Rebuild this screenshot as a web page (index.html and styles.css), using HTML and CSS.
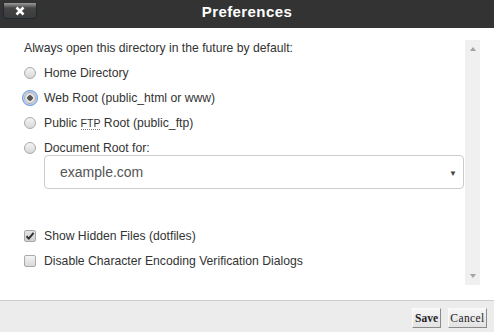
FILE: index.html
```html
<!DOCTYPE html>
<html lang="en">
<head>
    <meta charset="UTF-8">
    <title>Preferences</title>
    <link rel="stylesheet" href="styles.css">
</head>
<body>
    <div class="dialog">
        <div class="titlebar">
            <button class="close-btn" type="button">
                <svg width="10" height="10" viewBox="0 0 10 10"><path d="M1.5 1.5 L8.5 8.5 M8.5 1.5 L1.5 8.5" stroke="#fff" stroke-width="2.6"/></svg>
            </button>
            <h1 class="title">Preferences</h1>
            <span></span>
        </div>

        <div class="dialog-body">
            <form class="content">
                <div class="row intro">Always open this directory in the future by default:</div>

                <label class="row">
                    <input type="radio" name="dir" class="radio">
                    <span>Home Directory</span>
                </label>
                <label class="row">
                    <input type="radio" name="dir" class="radio focused" checked>
                    <span>Web Root (public_html or www)</span>
                </label>
                <label class="row">
                    <input type="radio" name="dir" class="radio">
                    <span>Public <abbr title="File Transfer Protocol">FTP</abbr> Root (public_ftp)</span>
                </label>
                <label class="row">
                    <input type="radio" name="dir" class="radio">
                    <span>Document Root for:</span>
                </label>

                <div class="select">
                    <span>example.com</span>
                    <span class="caret">&#9660;</span>
                </div>

                <label class="row check-first">
                    <span class="checkbox checked">
                        <svg width="10" height="10" viewBox="0 0 10 10"><path d="M1.5 5.2 L3.8 7.6 L8.6 1.8" fill="none" stroke="#333" stroke-width="2"/></svg>
                    </span>
                    <span>Show Hidden Files (dotfiles)</span>
                </label>
                <label class="row">
                    <span class="checkbox"></span>
                    <span>Disable Character Encoding Verification Dialogs</span>
                </label>
            </form>

            <div class="scrollbar">
                <span class="arrow up"></span>
                <span class="arrow down"></span>
            </div>
        </div>

        <div class="footer">
            <button class="btn btn-save" type="button">Save</button>
            <button class="btn btn-cancel" type="button">Cancel</button>
        </div>
    </div>
</body>
</html>
```

FILE: styles.css
```css
body {
    margin: 0;
    font-family: "Liberation Sans", Arial, sans-serif;
    color: #333;
    background: #fff;
}
.dialog {
    width: 494px;
    height: 332px;
    display: flex;
    flex-direction: column;
}

/* title bar */
.titlebar {
    height: 28px;
    background: #333;
    display: grid;
    grid-template-columns: 1fr auto 1fr;
    align-items: start;
}
.close-btn {
    justify-self: start;
    margin: 3px 0 0 3px;
    width: 34px;
    height: 16px;
    padding: 0;
    border: 1px solid #1d2a33;
    border-top: none;
    border-radius: 0 0 4px 4px;
    background: linear-gradient(#9a9a9a 0, #6a6a6a 3px, #454545 5px, #3b3b3b 100%);
    display: flex;
    align-items: center;
    justify-content: center;
}
.title {
    margin: 0;
    font-size: 15px;
    font-weight: bold;
    letter-spacing: 0.4px;
    line-height: 24px;
    color: #fff;
}

/* body */
.dialog-body {
    flex: 1;
    display: flex;
}
.content {
    flex: 1;
    margin: 0;
    padding: 12px 1px 0 24px;
    display: flex;
    flex-direction: column;
    font-size: 12.2px;
}
.row {
    height: 16px;
    display: flex;
    align-items: center;
    gap: 8px;
    margin-bottom: 9px;
    white-space: nowrap;
}
.row.intro {
    display: block;
    line-height: 16px;
}
abbr {
    text-decoration: none;
    border-bottom: 1px dotted #777;
    font-size: 10.5px;
    line-height: 12px;
}

.radio {
    appearance: none;
    -webkit-appearance: none;
    margin: 0;
    width: 12px;
    height: 12px;
    border: 1px solid #aaa;
    border-radius: 50%;
    background: linear-gradient(#f4f4f4, #d8d8d8);
    box-sizing: border-box;
}
.radio:checked {
    background: radial-gradient(circle, #555 0, #555 2.5px, #e6e6e6 3px, #d0d0d0 100%);
}
.radio.focused {
    box-shadow: 0 0 0 2px #b4cdf3;
    outline: 1px solid #7da3e0;
    outline-offset: 1px;
}

.select {
    margin: -10px 0 0 20px;
    height: 34px;
    border: 1px solid #ccc;
    border-radius: 4px;
    box-sizing: border-box;
    display: flex;
    align-items: center;
    justify-content: space-between;
    padding: 0 6px 0 15px;
    font-size: 14px;
    color: #555;
}
.caret {
    font-size: 8px;
    color: #444;
    padding-top: 2px;
}
.check-first {
    margin-top: 39px;
}
.checkbox {
    width: 12px;
    height: 12px;
    box-sizing: border-box;
    border: 1px solid #aaa;
    border-radius: 2px;
    background: linear-gradient(#f4f4f4, #d8d8d8);
    display: flex;
    align-items: center;
    justify-content: center;
}
.checkbox.checked {
    background: linear-gradient(#e4e4e4, #cfcfcf);
}

/* fake scrollbar */
.scrollbar {
    width: 15px;
    margin: 12px 14px 15px 0;
    background: #f0f0f0;
    display: flex;
    flex-direction: column;
    justify-content: space-between;
    align-items: center;
    padding: 7px 0;
    box-sizing: border-box;
}
.arrow {
    width: 0;
    height: 0;
    border-left: 3.5px solid transparent;
    border-right: 3.5px solid transparent;
}
.arrow.up {
    border-bottom: 4px solid #a3a3a3;
}
.arrow.down {
    border-top: 4px solid #a3a3a3;
}

/* footer */
.footer {
    height: 32px;
    box-sizing: border-box;
    border-top: 1px solid #ccc;
    background: #ececec;
    display: flex;
    justify-content: flex-end;
    align-items: center;
    gap: 7px;
    padding: 2px 7px 0 0;
}
.btn {
    height: 20px;
    padding: 0;
    font-family: "Liberation Serif", "Times New Roman", serif;
    font-size: 11.5px;
    color: #222;
    background: linear-gradient(#f6f6f6, #e2e2e2);
    border: 1px solid;
    border-color: #fafafa #8a8a8a #8a8a8a #fafafa;
}
.btn-save {
    font-weight: bold;
    width: 29px;
}
.btn-cancel {
    width: 39px;
    letter-spacing: 0.4px;
}
```
